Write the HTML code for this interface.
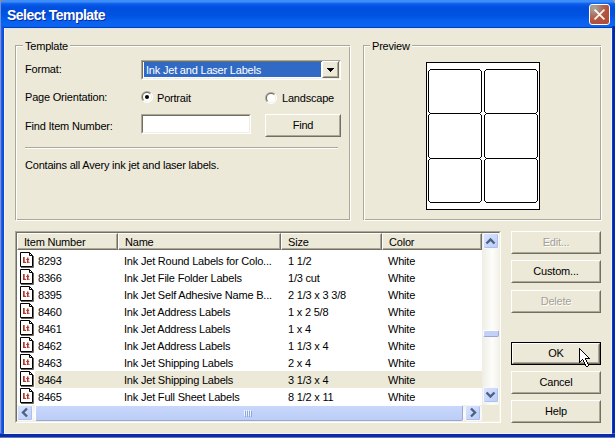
<!DOCTYPE html>
<html><head><meta charset="utf-8">
<style>
*{box-sizing:border-box;margin:0;padding:0}
html,body{width:615px;height:438px;overflow:hidden}
body{position:relative;background:#0A3ED6;font-family:"Liberation Sans",sans-serif}
.a{position:absolute}
.t{position:absolute;font-size:11px;letter-spacing:-0.2px;line-height:15px;white-space:nowrap;color:#000}
#title{left:0;top:0;width:615px;height:29px;background:linear-gradient(to bottom,#3D8EF8 0px,#3D8EF8 2px,#1A6AF0 3px,#0856E6 5px,#0050E0 8px,#0052E0 15px,#0860EE 21px,#0A64F2 26px,#0A60EE 27px,#0040B8 27px,#0040B8 28px,#DDE4F6 28px,#DDE4F6 29px)}
#ttext{left:7px;top:7px;font-size:14px;letter-spacing:-0.5px;font-weight:bold;line-height:16px;color:#fff;text-shadow:1px 1px 0 #0A2A9A;white-space:nowrap}
#client{left:4px;top:29px;width:608px;height:404px;background:#ECE9D8}
.gdark{position:absolute;border:1px solid #ACA899}
.glite{position:absolute;border:1px solid #fff}
.lbl{background:#ECE9D8;padding:0 2px}
.sunk{position:absolute;border-style:solid;border-width:1px;border-color:#ACA899 #fff #fff #ACA899}
.sunk2{position:absolute;border-style:solid;border-width:1px;border-color:#716F64 #F1EFE2 #F1EFE2 #716F64}
.btn{position:absolute;border-style:solid;border-width:1px;border-color:#fff #716F64 #716F64 #fff;background:#ECE9D8}
.btn>.in{position:absolute;left:0;top:0;right:0;bottom:0;border-style:solid;border-width:1px;border-color:#ECE9D8 #ACA899 #ACA899 #ECE9D8}
.btxt{position:absolute;left:0;right:0;text-align:center;font-size:11px;letter-spacing:-0.2px;line-height:13px;white-space:nowrap}
.dis{color:#A3A196;text-shadow:1px 1px 0 #fff}
.hd{border-style:solid;border-width:1px;border-color:#fff #716F64 #716F64 #fff;box-shadow:inset -1px -1px 0 #ACA899}
.sbb{position:absolute;width:16px;height:16px;border:1px solid #F6F8FE;border-radius:2px;background:linear-gradient(135deg,#D8E3FD,#BACDF9);box-shadow:inset -1px -1px 0 #AEBFEA}
</style></head><body>


<div id="title" class="a"></div>
<div class="a" style="left:0;top:0;width:3px;height:4px;background:linear-gradient(135deg,#8C8870 55%,transparent 55%)"></div>
<div class="a" style="right:0;top:0;width:3px;height:3px;background:linear-gradient(225deg,#8A9AB8 50%,transparent 50%)"></div>
<div id="ttext" class="a">Select Template</div>
<!-- close button -->
<div class="a" style="left:589px;top:4px;width:21px;height:21px;border:1px solid #fff;border-radius:3px;background:radial-gradient(circle at 20% 15%,#A8A49C 0,#A89088 18%,#AE6A58 38%,#B4523C 60%,#B04A36 100%)"></div>
<svg class="a" style="left:589px;top:4px" width="21" height="21"><path d="M6.2 6.2 L14.8 14.8 M14.8 6.2 L6.2 14.8" stroke="#FAF8EE" stroke-width="1.8" stroke-linecap="square"/></svg>

<div class="a" style="left:0;top:26px;width:4px;height:412px;background:linear-gradient(to right,#7A90D8 0,#7A90D8 1px,#2A60E0 1px,#2A60E0 2px,#1454DC 2px,#1454DC 3px,#0A4AD4 3px)"></div>
<div class="a" style="left:612px;top:26px;width:3px;height:412px;background:linear-gradient(to right,#0A3CC8 0,#0A3CC8 1px,#0028A8 1px,#0028A8 2px,#0A2CA8 2px)"></div>
<div class="a" style="left:0;top:433px;width:615px;height:5px;background:linear-gradient(to bottom,#3060D8 0,#3060D8 1px,#0A2CA8 1px,#0A2CA8 4px,#6878C0 4px)"></div>
<div class="a" style="left:0;top:0;width:1px;height:29px;background:#6A90E8"></div>
<div id="client" class="a"></div>
<div class="a" style="left:4px;top:28px;width:1px;height:406px;background:#F2F4FA"></div>
<div class="a" style="left:611px;top:28px;width:1px;height:406px;background:#F2F4FA"></div>
<div class="a" style="left:4px;top:433px;width:608px;height:1px;background:#F2F4FA"></div>

<!-- Template group -->
<div class="gdark" style="left:15px;top:45px;width:335px;height:175px"></div>
<div class="glite" style="left:16px;top:46px;width:335px;height:175px"></div>
<div class="t lbl" style="left:23px;top:39px">Template</div>

<div class="t" style="left:25px;top:62px">Format:</div>
<!-- combo -->
<div class="sunk" style="left:141px;top:60px;width:200px;height:20px"></div>
<div class="sunk2" style="left:142px;top:61px;width:198px;height:18px;background:#fff"></div>
<div class="a" style="left:144px;top:62px;width:177px;height:15px;background:#316AC5"></div>
<div class="t" style="left:146px;top:63px;color:#fff">Ink Jet and Laser Labels</div>
<div class="btn" style="left:322px;top:61px;width:17px;height:17px"><div class="in"></div></div>
<svg class="a" style="left:322px;top:62px" width="16" height="16"><path d="M5 6h7v1h-1v1h-1v1h-1v1h-1v-1h-1v-1h-1v-1h-1z" fill="#000"/></svg>

<div class="t" style="left:25px;top:90px">Page Orientation:</div>
<svg class="a" style="left:141px;top:91px" width="12" height="12">
 <path d="M6 6 L1.757 10.243 A6 6 0 0 1 10.243 1.757 Z" fill="#ACA899"/>
 <path d="M6 6 L1.757 10.243 A6 6 0 0 0 10.243 1.757 Z" fill="#fff"/>
 <path d="M6 6 L2.464 9.536 A5 5 0 0 1 9.536 2.464 Z" fill="#716F64"/>
 <path d="M6 6 L2.464 9.536 A5 5 0 0 0 9.536 2.464 Z" fill="#F1EFE2"/>
 <circle cx="6" cy="6" r="4" fill="#fff"/>
 <circle cx="6" cy="6" r="2" fill="#000"/>
</svg>
<div class="t" style="left:157px;top:91px">Portrait</div>
<svg class="a" style="left:265px;top:92px" width="12" height="12">
 <path d="M6 6 L1.757 10.243 A6 6 0 0 1 10.243 1.757 Z" fill="#ACA899"/>
 <path d="M6 6 L1.757 10.243 A6 6 0 0 0 10.243 1.757 Z" fill="#fff"/>
 <path d="M6 6 L2.464 9.536 A5 5 0 0 1 9.536 2.464 Z" fill="#716F64"/>
 <path d="M6 6 L2.464 9.536 A5 5 0 0 0 9.536 2.464 Z" fill="#F1EFE2"/>
 <circle cx="6" cy="6" r="4" fill="#fff"/>
</svg>
<div class="t" style="left:282px;top:91px">Landscape</div>

<div class="t" style="left:25px;top:119px">Find Item Number:</div>
<div class="sunk" style="left:141px;top:114px;width:110px;height:20px"></div>
<div class="sunk2" style="left:142px;top:115px;width:108px;height:18px;background:#fff"></div>
<div class="btn" style="left:265px;top:114px;width:76px;height:23px"><div class="in"></div><div class="btxt" style="top:4px">Find</div></div>

<div class="a" style="left:25px;top:147px;width:313px;height:1px;background:#ACA899"></div>
<div class="a" style="left:25px;top:148px;width:313px;height:1px;background:#fff"></div>
<div class="t" style="left:25px;top:158px">Contains all Avery ink jet and laser labels.</div>

<!-- Preview group -->
<div class="gdark" style="left:363px;top:45px;width:238px;height:175px"></div>
<div class="glite" style="left:364px;top:46px;width:238px;height:175px"></div>
<div class="t lbl" style="left:370px;top:39px">Preview</div>
<div class="a" style="left:426px;top:62px;width:114px;height:148px;background:#fff;border:1px solid #000"></div>
<svg class="a" style="left:426px;top:62px" width="114" height="148" shape-rendering="crispEdges"><path d="M4 7h50v1h-50zM4 51h50v1h-50zM2 9h1v41h-1zM55 9h1v41h-1zM3 8h1v1h-1zM54 8h1v1h-1zM3 50h1v1h-1zM54 50h1v1h-1zM60 7h50v1h-50zM60 51h50v1h-50zM58 9h1v41h-1zM111 9h1v41h-1zM59 8h1v1h-1zM110 8h1v1h-1zM59 50h1v1h-1zM110 50h1v1h-1zM4 51h50v1h-50zM4 96h50v1h-50zM2 53h1v42h-1zM55 53h1v42h-1zM3 52h1v1h-1zM54 52h1v1h-1zM3 95h1v1h-1zM54 95h1v1h-1zM60 51h50v1h-50zM60 96h50v1h-50zM58 53h1v42h-1zM111 53h1v42h-1zM59 52h1v1h-1zM110 52h1v1h-1zM59 95h1v1h-1zM110 95h1v1h-1zM4 96h50v1h-50zM4 140h50v1h-50zM2 98h1v41h-1zM55 98h1v41h-1zM3 97h1v1h-1zM54 97h1v1h-1zM3 139h1v1h-1zM54 139h1v1h-1zM60 96h50v1h-50zM60 140h50v1h-50zM58 98h1v41h-1zM111 98h1v41h-1zM59 97h1v1h-1zM110 97h1v1h-1zM59 139h1v1h-1zM110 139h1v1h-1z" fill="#000"/></svg>

<!-- listview -->
<div class="sunk" style="left:15px;top:231px;width:486px;height:192px"></div>
<div class="sunk2" style="left:16px;top:232px;width:484px;height:190px;background:#fff"></div>
<div id="lv">
<div class="a" style="left:17px;top:233px;width:465px;height:17px;background:#ECE9D8"></div>
<div class="a hd" style="left:17px;top:233px;width:101px;height:17px"></div>
<div class="t" style="left:24px;top:235px">Item Number</div>
<div class="a hd" style="left:118px;top:233px;width:163px;height:17px"></div>
<div class="t" style="left:125px;top:235px">Name</div>
<div class="a hd" style="left:281px;top:233px;width:101px;height:17px"></div>
<div class="t" style="left:288px;top:235px">Size</div>
<div class="a hd" style="left:382px;top:233px;width:100px;height:17px"></div>
<div class="t" style="left:389px;top:235px">Color</div>
<svg class="a ic" style="left:20px;top:252px" width="15" height="16"><path d="M0.5 0.5 H9.5 L12.5 3.5 V14.5 H0.5 Z" fill="#fff" stroke="#000"/> <path d="M9.5 0.5 V3.5 H12.5" fill="none" stroke="#000"/> <path d="M13.5 4 V15.5 H1" fill="none" stroke="#6B6660"/> <rect x="3" y="5" width="1.7" height="6" fill="#B03A30"/> <rect x="3" y="9.8" width="3.2" height="1.2" fill="#B03A30"/> <rect x="7" y="5.5" width="1.5" height="5.5" fill="#B03A30"/> <rect x="6.2" y="7" width="3" height="1" fill="#B03A30"/> <rect x="8.5" y="9.8" width="1" height="1.2" fill="#B03A30"/></svg>
<div class="t" style="left:38px;top:254px">8293</div>
<div class="t" style="left:124px;top:254px">Ink Jet Round Labels for Colo...</div>
<div class="t" style="left:288px;top:254px">1 1/2</div>
<div class="t" style="left:388px;top:254px">White</div>
<svg class="a ic" style="left:20px;top:269px" width="15" height="16"><path d="M0.5 0.5 H9.5 L12.5 3.5 V14.5 H0.5 Z" fill="#fff" stroke="#000"/> <path d="M9.5 0.5 V3.5 H12.5" fill="none" stroke="#000"/> <path d="M13.5 4 V15.5 H1" fill="none" stroke="#6B6660"/> <rect x="3" y="5" width="1.7" height="6" fill="#B03A30"/> <rect x="3" y="9.8" width="3.2" height="1.2" fill="#B03A30"/> <rect x="7" y="5.5" width="1.5" height="5.5" fill="#B03A30"/> <rect x="6.2" y="7" width="3" height="1" fill="#B03A30"/> <rect x="8.5" y="9.8" width="1" height="1.2" fill="#B03A30"/></svg>
<div class="t" style="left:38px;top:271px">8366</div>
<div class="t" style="left:124px;top:271px">Ink Jet File Folder Labels</div>
<div class="t" style="left:288px;top:271px">1/3 cut</div>
<div class="t" style="left:388px;top:271px">White</div>
<svg class="a ic" style="left:20px;top:286px" width="15" height="16"><path d="M0.5 0.5 H9.5 L12.5 3.5 V14.5 H0.5 Z" fill="#fff" stroke="#000"/> <path d="M9.5 0.5 V3.5 H12.5" fill="none" stroke="#000"/> <path d="M13.5 4 V15.5 H1" fill="none" stroke="#6B6660"/> <rect x="3" y="5" width="1.7" height="6" fill="#B03A30"/> <rect x="3" y="9.8" width="3.2" height="1.2" fill="#B03A30"/> <rect x="7" y="5.5" width="1.5" height="5.5" fill="#B03A30"/> <rect x="6.2" y="7" width="3" height="1" fill="#B03A30"/> <rect x="8.5" y="9.8" width="1" height="1.2" fill="#B03A30"/></svg>
<div class="t" style="left:38px;top:288px">8395</div>
<div class="t" style="left:124px;top:288px">Ink Jet Self Adhesive Name B...</div>
<div class="t" style="left:288px;top:288px">2 1/3 x 3 3/8</div>
<div class="t" style="left:388px;top:288px">White</div>
<svg class="a ic" style="left:20px;top:303px" width="15" height="16"><path d="M0.5 0.5 H9.5 L12.5 3.5 V14.5 H0.5 Z" fill="#fff" stroke="#000"/> <path d="M9.5 0.5 V3.5 H12.5" fill="none" stroke="#000"/> <path d="M13.5 4 V15.5 H1" fill="none" stroke="#6B6660"/> <rect x="3" y="5" width="1.7" height="6" fill="#B03A30"/> <rect x="3" y="9.8" width="3.2" height="1.2" fill="#B03A30"/> <rect x="7" y="5.5" width="1.5" height="5.5" fill="#B03A30"/> <rect x="6.2" y="7" width="3" height="1" fill="#B03A30"/> <rect x="8.5" y="9.8" width="1" height="1.2" fill="#B03A30"/></svg>
<div class="t" style="left:38px;top:305px">8460</div>
<div class="t" style="left:124px;top:305px">Ink Jet Address Labels</div>
<div class="t" style="left:288px;top:305px">1 x 2 5/8</div>
<div class="t" style="left:388px;top:305px">White</div>
<svg class="a ic" style="left:20px;top:320px" width="15" height="16"><path d="M0.5 0.5 H9.5 L12.5 3.5 V14.5 H0.5 Z" fill="#fff" stroke="#000"/> <path d="M9.5 0.5 V3.5 H12.5" fill="none" stroke="#000"/> <path d="M13.5 4 V15.5 H1" fill="none" stroke="#6B6660"/> <rect x="3" y="5" width="1.7" height="6" fill="#B03A30"/> <rect x="3" y="9.8" width="3.2" height="1.2" fill="#B03A30"/> <rect x="7" y="5.5" width="1.5" height="5.5" fill="#B03A30"/> <rect x="6.2" y="7" width="3" height="1" fill="#B03A30"/> <rect x="8.5" y="9.8" width="1" height="1.2" fill="#B03A30"/></svg>
<div class="t" style="left:38px;top:322px">8461</div>
<div class="t" style="left:124px;top:322px">Ink Jet Address Labels</div>
<div class="t" style="left:288px;top:322px">1 x 4</div>
<div class="t" style="left:388px;top:322px">White</div>
<svg class="a ic" style="left:20px;top:337px" width="15" height="16"><path d="M0.5 0.5 H9.5 L12.5 3.5 V14.5 H0.5 Z" fill="#fff" stroke="#000"/> <path d="M9.5 0.5 V3.5 H12.5" fill="none" stroke="#000"/> <path d="M13.5 4 V15.5 H1" fill="none" stroke="#6B6660"/> <rect x="3" y="5" width="1.7" height="6" fill="#B03A30"/> <rect x="3" y="9.8" width="3.2" height="1.2" fill="#B03A30"/> <rect x="7" y="5.5" width="1.5" height="5.5" fill="#B03A30"/> <rect x="6.2" y="7" width="3" height="1" fill="#B03A30"/> <rect x="8.5" y="9.8" width="1" height="1.2" fill="#B03A30"/></svg>
<div class="t" style="left:38px;top:339px">8462</div>
<div class="t" style="left:124px;top:339px">Ink Jet Address Labels</div>
<div class="t" style="left:288px;top:339px">1 1/3 x 4</div>
<div class="t" style="left:388px;top:339px">White</div>
<svg class="a ic" style="left:20px;top:354px" width="15" height="16"><path d="M0.5 0.5 H9.5 L12.5 3.5 V14.5 H0.5 Z" fill="#fff" stroke="#000"/> <path d="M9.5 0.5 V3.5 H12.5" fill="none" stroke="#000"/> <path d="M13.5 4 V15.5 H1" fill="none" stroke="#6B6660"/> <rect x="3" y="5" width="1.7" height="6" fill="#B03A30"/> <rect x="3" y="9.8" width="3.2" height="1.2" fill="#B03A30"/> <rect x="7" y="5.5" width="1.5" height="5.5" fill="#B03A30"/> <rect x="6.2" y="7" width="3" height="1" fill="#B03A30"/> <rect x="8.5" y="9.8" width="1" height="1.2" fill="#B03A30"/></svg>
<div class="t" style="left:38px;top:356px">8463</div>
<div class="t" style="left:124px;top:356px">Ink Jet Shipping Labels</div>
<div class="t" style="left:288px;top:356px">2 x 4</div>
<div class="t" style="left:388px;top:356px">White</div>
<div class="a" style="left:35px;top:371px;width:447px;height:17px;background:#ECE9D8"></div>
<svg class="a ic" style="left:20px;top:371px" width="15" height="16"><path d="M0.5 0.5 H9.5 L12.5 3.5 V14.5 H0.5 Z" fill="#fff" stroke="#000"/> <path d="M9.5 0.5 V3.5 H12.5" fill="none" stroke="#000"/> <path d="M13.5 4 V15.5 H1" fill="none" stroke="#6B6660"/> <rect x="3" y="5" width="1.7" height="6" fill="#B03A30"/> <rect x="3" y="9.8" width="3.2" height="1.2" fill="#B03A30"/> <rect x="7" y="5.5" width="1.5" height="5.5" fill="#B03A30"/> <rect x="6.2" y="7" width="3" height="1" fill="#B03A30"/> <rect x="8.5" y="9.8" width="1" height="1.2" fill="#B03A30"/></svg>
<div class="t" style="left:38px;top:373px">8464</div>
<div class="t" style="left:124px;top:373px">Ink Jet Shipping Labels</div>
<div class="t" style="left:288px;top:373px">3 1/3 x 4</div>
<div class="t" style="left:388px;top:373px">White</div>
<svg class="a ic" style="left:20px;top:388px" width="15" height="16"><path d="M0.5 0.5 H9.5 L12.5 3.5 V14.5 H0.5 Z" fill="#fff" stroke="#000"/> <path d="M9.5 0.5 V3.5 H12.5" fill="none" stroke="#000"/> <path d="M13.5 4 V15.5 H1" fill="none" stroke="#6B6660"/> <rect x="3" y="5" width="1.7" height="6" fill="#B03A30"/> <rect x="3" y="9.8" width="3.2" height="1.2" fill="#B03A30"/> <rect x="7" y="5.5" width="1.5" height="5.5" fill="#B03A30"/> <rect x="6.2" y="7" width="3" height="1" fill="#B03A30"/> <rect x="8.5" y="9.8" width="1" height="1.2" fill="#B03A30"/></svg>
<div class="t" style="left:38px;top:390px">8465</div>
<div class="t" style="left:124px;top:390px">Ink Jet Full Sheet Labels</div>
<div class="t" style="left:288px;top:390px">8 1/2 x 11</div>
<div class="t" style="left:388px;top:390px">White</div>
</div>
<!-- scrollbars -->
<div class="a" style="left:482px;top:233px;width:17px;height:172px;background:linear-gradient(to right,#EEEDE5,#FDFDFA 60%,#F3F1EA)"></div>
<div class="sbb" style="left:483px;top:233px"></div>
<svg class="a" style="left:483px;top:234px" width="16" height="16"><path d="M3.5 9.5 L7.5 5.5 L11.5 9.5" stroke="#4D6185" stroke-width="2.4" fill="none"/></svg>
<div class="a" style="left:483px;top:330px;width:16px;height:7px;border:1px solid;border-color:#fff #9DA8D8 #9AA4D6 #fff;border-radius:2px;background:#C3D0F8"></div>
<div class="sbb" style="left:483px;top:387px"></div>
<svg class="a" style="left:483px;top:387px" width="16" height="16"><path d="M3.5 5.5 L7.5 9.5 L11.5 5.5" stroke="#4D6185" stroke-width="2.4" fill="none"/></svg>
<div class="a" style="left:17px;top:405px;width:465px;height:16px;background:linear-gradient(to bottom,#EEEDE5,#FDFDFA 60%,#F3F1EA)"></div>
<div class="sbb" style="left:17px;top:405px"></div>
<svg class="a" style="left:17px;top:405px" width="16" height="16"><path d="M10 3.5 L6 7.5 L10 11.5" stroke="#4D6185" stroke-width="2.4" fill="none"/></svg>
<div class="a" style="left:35px;top:405px;width:428px;height:16px;border:1px solid;border-color:#fff #9DA8D8 #9AA4D6 #fff;border-radius:2px;background:linear-gradient(to bottom,#C8D7FB,#BBCDF8)"></div>
<svg class="a" style="left:243px;top:409px" width="10" height="8"><path d="M1.5 1v6M3.5 1v6M5.5 1v6M7.5 1v6" stroke="#EEF3FE" stroke-width="1"/><path d="M2.5 2v6M4.5 2v6M6.5 2v6M8.5 2v6" stroke="#8CA6E0" stroke-width="1"/></svg>
<div class="sbb" style="left:465px;top:405px"></div>
<svg class="a" style="left:465px;top:405px" width="16" height="16"><path d="M6 3.5 L10 7.5 L6 11.5" stroke="#4D6185" stroke-width="2.4" fill="none"/></svg>
<div class="a" style="left:482px;top:405px;width:17px;height:16px;background:#ECE9D8"></div>
<!-- right buttons -->
<div class="btn" style="left:511px;top:231px;width:90px;height:23px"><div class="in"></div><div class="btxt dis" style="top:4px">Edit...</div></div>
<div class="btn" style="left:511px;top:260px;width:90px;height:23px"><div class="in"></div><div class="btxt" style="top:4px">Custom...</div></div>
<div class="btn" style="left:511px;top:290px;width:90px;height:23px"><div class="in"></div><div class="btxt dis" style="top:4px">Delete</div></div>
<div class="a" style="left:511px;top:342px;width:90px;height:23px;border:1px solid #000"></div>
<div class="btn" style="left:512px;top:343px;width:88px;height:21px"><div class="in"></div><div class="btxt" style="top:3px">OK</div></div>
<div class="btn" style="left:511px;top:371px;width:90px;height:23px"><div class="in"></div><div class="btxt" style="top:4px">Cancel</div></div>
<div class="btn" style="left:511px;top:400px;width:90px;height:23px"><div class="in"></div><div class="btxt" style="top:4px">Help</div></div>

<!-- cursor -->
<svg class="a" style="left:579px;top:348px" width="12" height="19" shape-rendering="crispEdges"><path d="M0 0h1v1h-1zM0 1h2v1h-2zM0 2h1v1h-1zM2 2h1v1h-1zM0 3h1v1h-1zM3 3h1v1h-1zM0 4h1v1h-1zM4 4h1v1h-1zM0 5h1v1h-1zM5 5h1v1h-1zM0 6h1v1h-1zM6 6h1v1h-1zM0 7h1v1h-1zM7 7h1v1h-1zM0 8h1v1h-1zM8 8h1v1h-1zM0 9h1v1h-1zM9 9h1v1h-1zM0 10h1v1h-1zM6 10h5v1h-5zM0 11h1v1h-1zM3 11h1v1h-1zM6 11h1v1h-1zM0 12h1v1h-1zM2 12h1v1h-1zM4 12h1v1h-1zM7 12h1v1h-1zM0 13h2v1h-2zM4 13h1v1h-1zM7 13h1v1h-1zM0 14h1v1h-1zM5 14h1v1h-1zM8 14h1v1h-1zM5 15h1v1h-1zM8 15h1v1h-1zM6 16h1v1h-1zM9 16h1v1h-1zM6 17h1v1h-1zM9 17h1v1h-1zM7 18h2v1h-2z" fill="#000"/><path d="M1 2h1v1h-1zM1 3h2v1h-2zM1 4h3v1h-3zM1 5h4v1h-4zM1 6h5v1h-5zM1 7h6v1h-6zM1 8h7v1h-7zM1 9h8v1h-8zM1 10h5v1h-5zM1 11h2v1h-2zM4 11h2v1h-2zM1 12h1v1h-1zM5 12h2v1h-2zM5 13h2v1h-2zM6 14h2v1h-2zM6 15h2v1h-2zM7 16h2v1h-2zM7 17h2v1h-2z" fill="#fff"/></svg>
</body></html>
